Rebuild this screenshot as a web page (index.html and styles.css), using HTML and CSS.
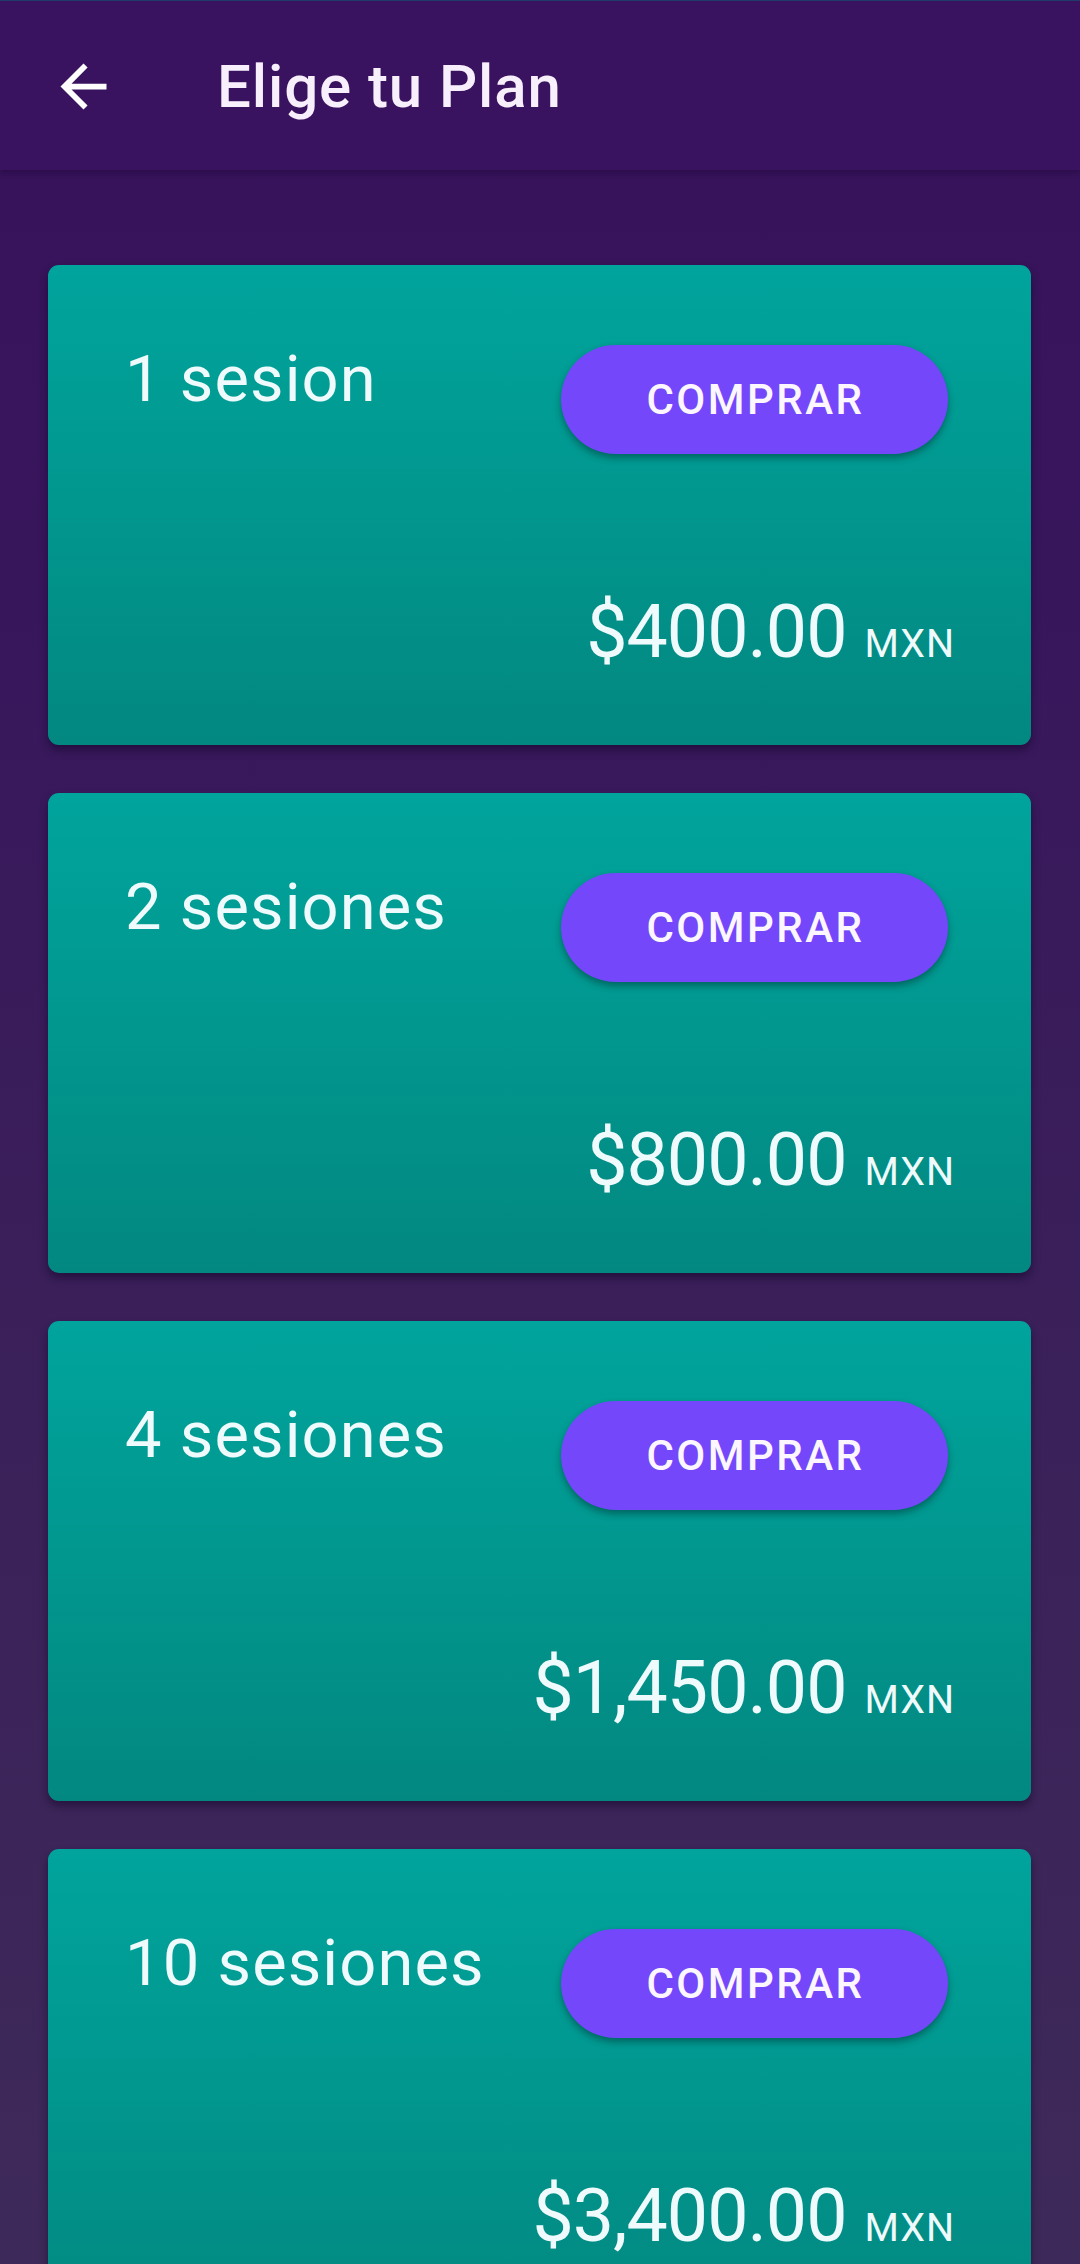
FILE: index.html
```html
<!DOCTYPE html>
<html lang="es">
<head>
<meta charset="utf-8">
<title>Elige tu Plan</title>
<link rel="stylesheet" href="styles.css">
</head>
<body>
<div class="screen">
  <header class="appbar">
    <button class="back" aria-label="Atrás">
      <svg class="back-icon" viewBox="0 0 24 24" width="69" height="69" aria-hidden="true">
        <path d="M20 11H7.83l5.59-5.59L12 4l-8 8 8 8 1.41-1.41L7.83 13H20v-2z" fill="#ffffff"/>
      </svg>
    </button>
    <h1 class="title">Elige tu Plan</h1>
  </header>

  <main class="plans">
    <section class="card">
      <div class="card-top">
        <h2 class="plan-name">1 sesion</h2>
        <button class="buy">COMPRAR</button>
      </div>
      <div class="price-row"><span class="price">$400.00</span><span class="currency">MXN</span></div>
    </section>

    <section class="card">
      <div class="card-top">
        <h2 class="plan-name">2 sesiones</h2>
        <button class="buy">COMPRAR</button>
      </div>
      <div class="price-row"><span class="price">$800.00</span><span class="currency">MXN</span></div>
    </section>

    <section class="card">
      <div class="card-top">
        <h2 class="plan-name">4 sesiones</h2>
        <button class="buy">COMPRAR</button>
      </div>
      <div class="price-row"><span class="price">$1,450.00</span><span class="currency">MXN</span></div>
    </section>

    <section class="card">
      <div class="card-top">
        <h2 class="plan-name">10 sesiones</h2>
        <button class="buy">COMPRAR</button>
      </div>
      <div class="price-row"><span class="price">$3,400.00</span><span class="currency">MXN</span></div>
    </section>
  </main>
</div>
</body>
</html>
```

FILE: styles.css
```css
* {
  box-sizing: border-box;
}

html, body {
  margin: 0;
  padding: 0;
}

body {
  font-family: Roboto, "Noto Sans", "Liberation Sans", sans-serif;
  background: #3e2a5a;
}

.screen {
  width: 1080px;
  height: 2264px;
  overflow: hidden;
  background: linear-gradient(180deg, #37125b 0px, #38165c 600px, #3b2259 1500px, #3e2a5a 2264px);
}

.appbar {
  position: relative;
  z-index: 2;
  height: 170px;
  border-top: 1px solid #1f3b69;
  background: #39135f;
  display: flex;
  align-items: center;
  box-shadow: 0 3px 6px rgba(20, 0, 40, 0.35);
}

.back {
  width: 69px;
  height: 69px;
  margin-left: 49px;
  margin-top: 2px;
  padding: 0;
  border: 0;
  background: transparent;
  display: flex;
}

.back-icon {
  display: block;
}

.title {
  margin: 2px 0 0 99px;
  font-size: 60px;
  font-weight: 500;
  color: #f7effb;
  line-height: 1;
  letter-spacing: 0.9px;
}

.plans {
  display: flex;
  flex-direction: column;
  gap: 48px;
  padding: 95px 49px 0 48px;
}

.card {
  height: 480px;
  border-radius: 11px;
  background: linear-gradient(180deg, #00a49c 0%, #019890 45%, #028880 100%);
  box-shadow: 0 5px 8px rgba(10, 0, 30, 0.45);
  display: flex;
  flex-direction: column;
  padding: 80px 83px 70px 77px;
}

.card-top {
  display: flex;
  justify-content: space-between;
  align-items: flex-start;
}

.plan-name {
  margin: -4px 0 0 0;
  font-size: 65px;
  font-weight: 400;
  line-height: 1.172;
  color: #eefafb;
  letter-spacing: 1.1px;
}

.buy {
  width: 387px;
  height: 109px;
  border: 0;
  border-radius: 55px;
  background: #7447fb;
  color: #fcf6ff;
  font-family: Roboto, "Noto Sans", "Liberation Sans", sans-serif;
  font-size: 42px;
  font-weight: 500;
  letter-spacing: 2.5px;
  padding: 0 0 0 2px;
  box-shadow: 0 4px 7px rgba(0, 40, 40, 0.45);
}

.price-row {
  margin-top: auto;
  margin-right: -7px;
  display: flex;
  justify-content: flex-end;
  align-items: baseline;
  color: #eefafb;
  line-height: normal;
}

.price {
  font-size: 73.5px;
  font-weight: 400;
  letter-spacing: -1px;
}

.currency {
  font-size: 39.4px;
  font-weight: 400;
  margin-left: 18px;
  letter-spacing: 1px;
}
```
